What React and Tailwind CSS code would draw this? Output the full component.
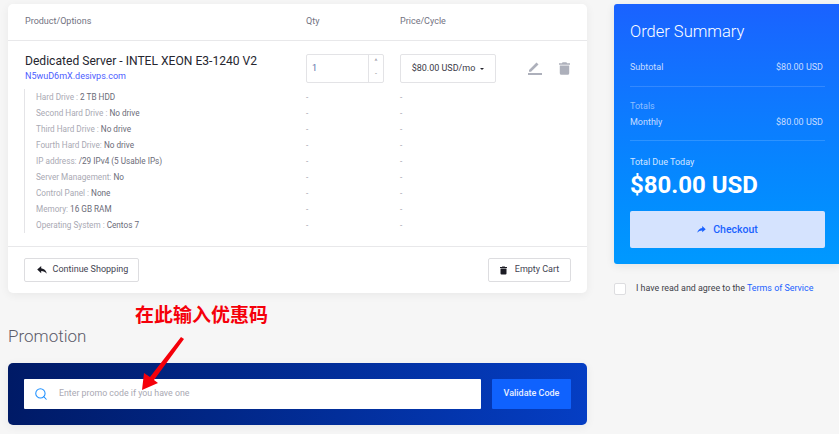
import { Search } from "lucide-react";

const SPECS = [
  { label: "Hard Drive :", value: "2 TB HDD" },
  { label: "Second Hard Drive :", value: "No drive" },
  { label: "Third Hard Drive :", value: "No drive" },
  { label: "Fourth Hard Drive:", value: "No drive" },
  { label: "IP address:", value: "/29 IPv4 (5 Usable IPs)" },
  { label: "Server Management:", value: "No" },
  { label: "Control Panel :", value: "None" },
  { label: "Memory:", value: "16 GB RAM" },
  { label: "Operating System :", value: "Centos 7" },
];

function TrashIcon({ className }) {
  return (
    <svg viewBox="0 0 14 16" className={className} fill="currentColor">
      <path d="M4.5 0h5l.7 1.2H14v2H0v-2h3.8zM1 4.2h12V14a2 2 0 0 1-2 2H3a2 2 0 0 1-2-2z" />
    </svg>
  );
}

function ShareIcon({ className }) {
  return (
    <svg viewBox="0 0 12 10" className={className} fill="currentColor">
      <path d="M7 0l5 4.5L7 9V6.3C4 6.3 2 7.3 0 9.6.6 6.200 3 3.600 7 2.900z" />
    </svg>
  );
}

function BackIcon({ className }) {
  return (
    <svg viewBox="0 0 12 10" className={className} fill="currentColor">
      <path d="M5 0L0 4.500 5 9V6.300c3 0 5 1 7 3.300C11.400 6.200 9 3.600 5 2.900z" />
    </svg>
  );
}

export default function App() {
  return (
    <div className="relative flex w-[839px] h-[434px] gap-[27px] overflow-hidden bg-[#f6f6f6] pl-2 pt-1 font-['Roboto',sans-serif]">
      {/* Left column */}
      <div className="w-[579px] shrink-0">
        <div className="rounded-[5px] bg-white shadow-[0_2px_10px_rgba(0,0,0,0.06)]">
          <div className="grid h-[37px] grid-cols-[282px_94px_1fr] items-center border-b border-[#e8e8ea] pl-4 text-[9px] text-[#72727f]">
            <span className="pl-px">Product/Options</span>
            <span>Qty</span>
            <span>Price/Cycle</span>
          </div>

          <div className="h-[205px] pt-[13px]">
            <div className="grid h-[35px] grid-cols-[282px_94px_1fr] pl-4">
              <div className="pl-px">
                <div className="text-[12.100px] leading-[14px] whitespace-nowrap text-[#26262f]">
                  Dedicated Server - INTEL XEON E3-1240 V2
                </div>
                <div className="mt-[2px] text-[9px] leading-[12px] text-[#4c5cff]">N5wuD6mX.desivps.com</div>
              </div>
              <div className="flex h-[29px] w-[78px] rounded-[2px] border border-[#e3e3e6]">
                <span className="flex-1 pl-[5px] text-[9px] leading-[27px] text-[#5a6fa8]">1</span>
                <div className="flex w-[15px] flex-col items-center justify-center gap-[7px] border-l border-[#e3e3e6] text-[7px] leading-[5px] text-[#8a8a94]">
                  <span>^</span>
                  <span>-</span>
                </div>
              </div>
              <div className="flex items-start">
                <div className="flex h-[29px] w-[96px] items-center justify-center gap-[5px] rounded-[2px] border border-[#e3e3e6] text-[9px] text-[#3a3a46]">
                  $80.00 USD/mo
                  <span className="h-0 w-0 border-x-[2.500px] border-t-[2.500px] border-x-transparent border-t-[#26262f]" />
                </div>
                <div className="ml-[32px] flex items-center gap-[17px] pt-[8px]">
                  <svg viewBox="0 0 14 13" className="h-[13px] w-[14px] text-[#adb0bb]" fill="currentColor">
                    <path d="M0 11h14v2H0zM1 9.800V8L8.500.500l2 2L3 9.800z" />
                  </svg>
                  <TrashIcon className="h-[13px] w-[11px] text-[#adb0bb]" />
                </div>
              </div>
            </div>

            <div className="ml-[16px] border-l border-[#e4e4e7]">
              {SPECS.map((spec) => (
                <div key={spec.label} className="grid h-4 grid-cols-[270px_94px_1fr] items-center pl-[11px] text-[8.200px] text-[#a9a9b3]">
                  <div className="whitespace-nowrap">
                    {spec.label} <span className="text-[#6b6b78]">{spec.value}</span>
                  </div>
                  <span>-</span>
                  <span>-</span>
                </div>
              ))}
            </div>
          </div>

          <div className="flex h-[47px] items-center justify-between border-t border-[#e8e8ea] px-4">
            <button className="flex h-[24px] w-[115px] items-center justify-center gap-[6px] rounded-[2px] border border-[#dddde0] pl-[2px] text-[9px] text-[#444452]">
              <BackIcon className="h-[8px] w-[10px] text-[#1c1c24]" />
              Continue Shopping
            </button>
            <button className="flex h-[24px] w-[83px] items-center justify-center gap-[8px] rounded-[2px] border border-[#dddde0] text-[9px] text-[#444452]">
              <TrashIcon className="h-[9px] w-[7px] text-[#1c1c24]" />
              Empty Cart
            </button>
          </div>
        </div>

        <h2 className="mt-[33px] text-[17px] leading-5 font-light text-[#5c5c6a]">Promotion</h2>

        <div className="mt-[17px] flex h-[62px] items-center gap-[11px] rounded-[5px] bg-gradient-to-r from-[#001a66] to-[#053ec4] px-4 shadow-[0_2px_10px_rgba(0,0,0,0.06)]">
          <div className="flex h-[30px] flex-1 items-center rounded-[1px] bg-white pl-[10px]">
            <Search className="h-[14px] w-[14px] text-[#1e90ff]" strokeWidth={1.800} />
            <span className="ml-[11px] text-[8.800px] text-[#a9a9b3]">Enter promo code if you have one</span>
          </div>
          <button className="h-[30px] w-[79px] rounded-[1px] bg-[#0f62fe] text-[9px] font-medium text-[#e8efff]">
            Validate Code
          </button>
        </div>
      </div>

      {/* Right column */}
      <div className="w-[227px] shrink-0">
        <div className="h-[260px] rounded-[3px] bg-gradient-to-b from-[#1a62ff] to-[#0099ff] px-4 pt-[18px] shadow-[0_2px_10px_rgba(0,0,0,0.08)]">
          <h2 className="text-[16.500px] leading-5 font-light text-white">Order Summary</h2>
          <div className="mt-[20px] flex justify-between pr-[2px] pb-[13px] text-[9px] leading-[11px] text-[#c7dcff]">
            <span>Subtotal</span>
            <span>$80.00 USD</span>
          </div>
          <div className="border-t border-white/15 pt-[14px] text-[9px] leading-[11px]">
            <div className="text-[#8fbfff]">Totals</div>
            <div className="mt-[5px] flex justify-between pr-[2px] pb-[12px] text-[#c7dcff]">
              <span>Monthly</span>
              <span>$80.00 USD</span>
            </div>
          </div>
          <div className="border-t border-white/15 pt-[16px]">
            <div className="text-[9px] leading-[11px] text-[#d3e5ff]">Total Due Today</div>
            <div className="mt-[3px] text-[24px] leading-[28px] font-bold text-white">$80.00 USD</div>
          </div>
          <button className="mt-[12px] flex h-[37px] w-full items-center justify-center gap-[7px] rounded-[2px] bg-[#d5e3fe] text-[10.500px] font-medium text-[#1a62ff]">
            <ShareIcon className="h-[7px] w-[9px]" />
            Checkout
          </button>
        </div>
        <div className="mt-[18px] flex items-center gap-[10px]">
          <span className="h-3 w-3 rounded-[2px] border border-[#dddde0] bg-white" />
          <span className="text-[8.900px] text-[#3f3f4a]">
            I have read and agree to the <span className="text-[#1a62ff]">Terms of Service</span>
          </span>
        </div>
      </div>

      {/* Annotation drawn over the screenshot */}
      <div className="absolute left-[135px] top-[303px] text-[19px] leading-[22px] font-bold whitespace-nowrap text-[#f5000a] font-['Noto_Sans_CJK_SC',sans-serif]">
        在此输入优惠码
      </div>
      <svg viewBox="0 0 48 58" className="absolute left-[138px] top-[334px] h-[58px] w-[48px]" fill="#f5000a">
        <path d="M43 3l3 2-30 41 4 3-16 7 2-17 6 4z" />
      </svg>
    </div>
  );
}
